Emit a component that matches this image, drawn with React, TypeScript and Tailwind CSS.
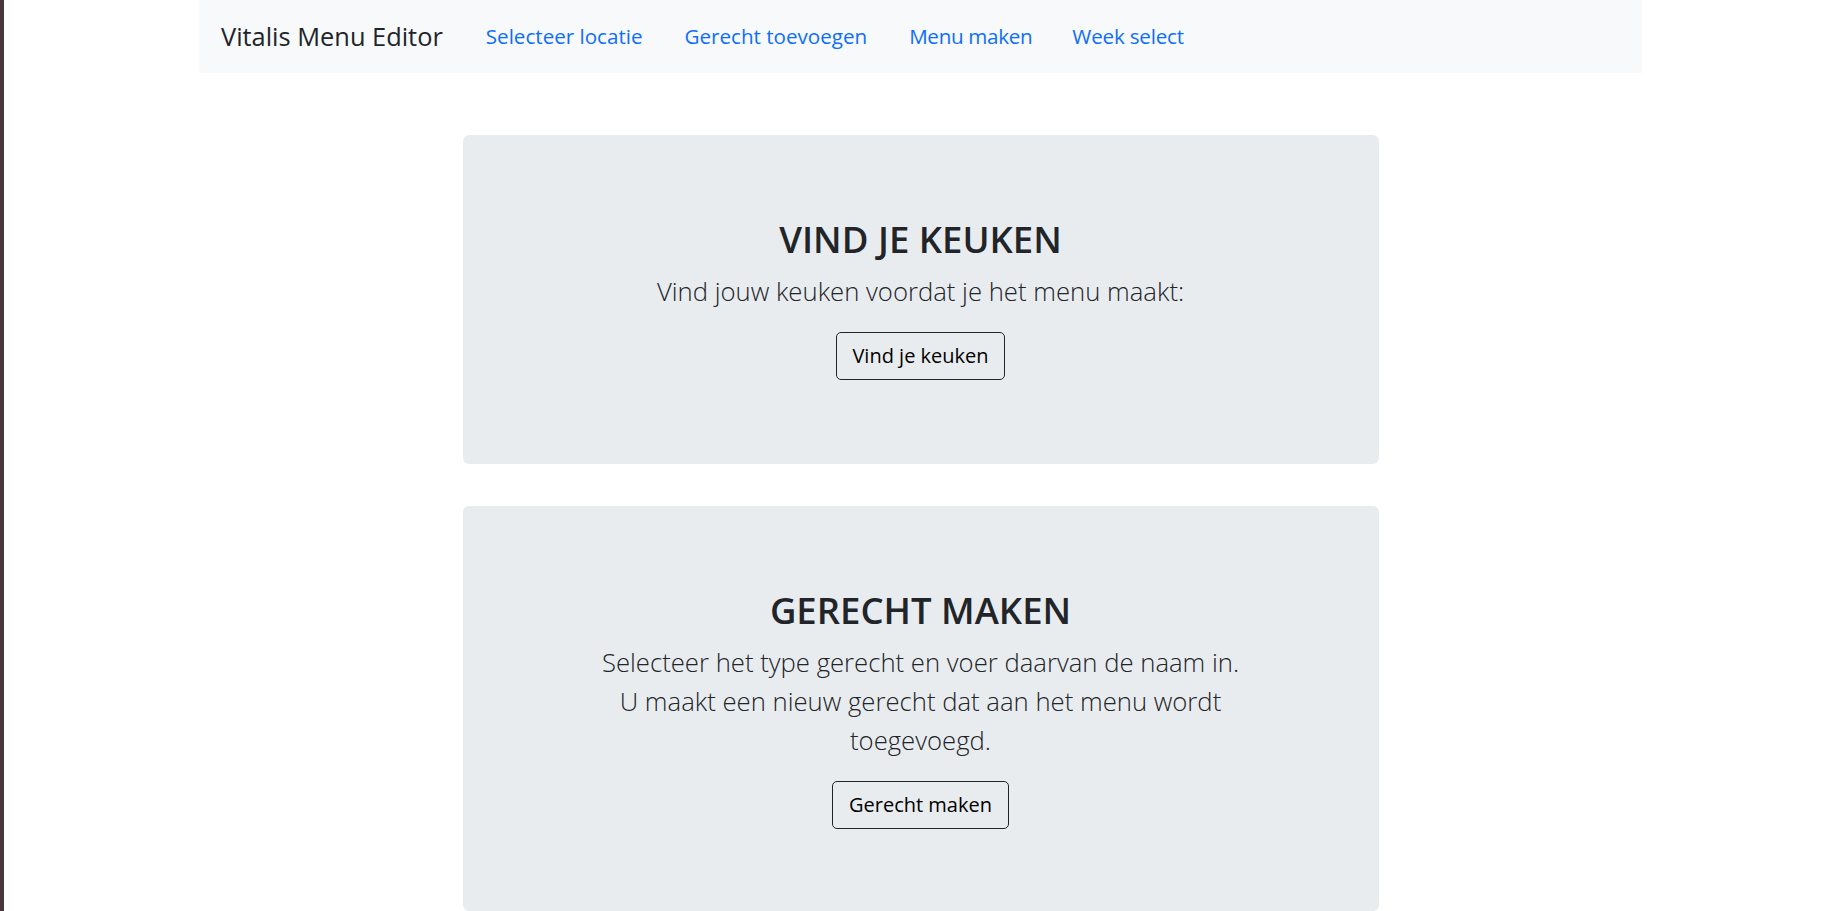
import React from "react";

const font = { fontFamily: '"Open Sans", "Noto Sans", sans-serif' };

function Card({
  title,
  lines,
  button,
  height,
}: {
  title: string;
  lines: string[];
  button: string;
  height: string;
}) {
  return (
    <section
      className={`w-full rounded-[6px] bg-[#e9ecef] pt-[79px] flex flex-col items-center text-center ${height}`}
    >
      <h2 className="text-[36.5px] leading-[50px] font-semibold text-[#212529] whitespace-nowrap">
        {title}
      </h2>
      <p className="mt-[8px] text-[25.7px] leading-[39px] font-light text-[#212529] whitespace-nowrap">
        {lines.map((l, i) => (
          <React.Fragment key={i}>
            {l}
            {i < lines.length - 1 && <br />}
          </React.Fragment>
        ))}
      </p>
      <button className="mt-[21px] h-[48px] px-[15.6px] border border-[#212529] rounded-[5px] text-[20px] text-black bg-transparent">
        {button}
      </button>
    </section>
  );
}

export default function App() {
  return (
    <div className="flex h-screen overflow-hidden bg-white" style={font}>
      <div className="w-[4px] shrink-0 bg-[#4b353d]" />
      <div className="flex-1 flex flex-col items-center">
        <nav className="w-[1443px] h-[73px] shrink-0 bg-[#f8f9fa] flex items-center pl-[22px]">
          <span className="text-[25.4px] text-[#212529] whitespace-nowrap">
            Vitalis Menu Editor
          </span>
          <div className="ml-[43px] flex items-center text-[20.6px] text-[#0d6efd]">
            <a className="whitespace-nowrap cursor-pointer">Selecteer locatie</a>
            <a className="ml-[42px] whitespace-nowrap cursor-pointer">Gerecht toevoegen</a>
            <a className="ml-[42px] whitespace-nowrap cursor-pointer tracking-[-0.3px]">Menu maken</a>
            <a className="ml-[40px] whitespace-nowrap cursor-pointer tracking-[-0.2px]">Week select</a>
          </div>
        </nav>
        <main className="w-[916px] mt-[62px] flex flex-col gap-[42px]">
          <Card
            title="VIND JE KEUKEN"
            lines={["Vind jouw keuken voordat je het menu maakt:"]}
            button="Vind je keuken"
            height="h-[329px]"
          />
          <Card
            title="GERECHT MAKEN"
            lines={[
              "Selecteer het type gerecht en voer daarvan de naam in.",
              "U maakt een nieuw gerecht dat aan het menu wordt",
              "toegevoegd.",
            ]}
            button="Gerecht maken"
            height="h-[405px]"
          />
        </main>
      </div>
    </div>
  );
}
